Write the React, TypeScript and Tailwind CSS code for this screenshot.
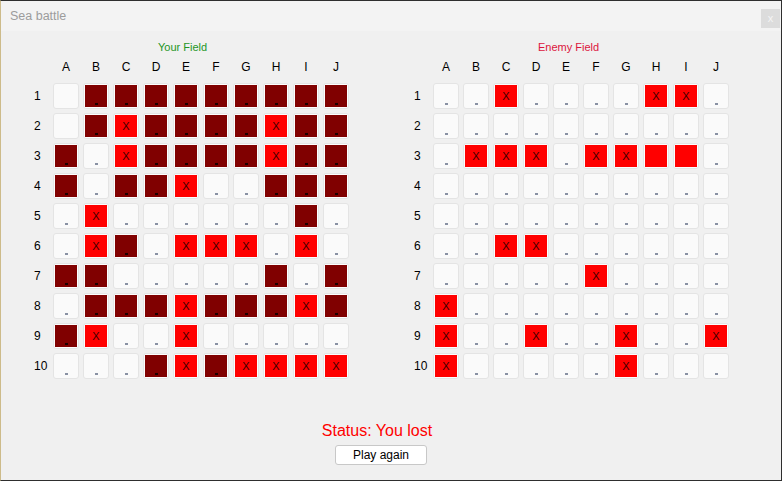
const COLS = ['A', 'B', 'C', 'D', 'E', 'F', 'G', 'H', 'I', 'J'];

// ' ' empty, '.' miss/unknown, 'S' ship, 'X' hit, 'R' hit without mark
const YOUR_FIELD = [
  ' SSSSSSSSS',
  ' SXSSSSXSS',
  'S.XSSSSXSS',
  'S.SSX..SSS',
  '.X......S.',
  '.XS.XXX.X.',
  'SS.....S.S',
  '.SSSXSSSXS',
  'SX..X.....',
  '...SXSXXXX',
];

const ENEMY_FIELD = [
  '..X....XX.',
  '..........',
  '.XXX.XXRR.',
  '..........',
  '..........',
  '..XX......',
  '.....X....',
  'X.........',
  'X..X..X..X',
  'X.....X...',
];

function Cell({ v }: { v: string }) {
  const base = 'flex h-[26px] w-[26px] rounded-[3px] border border-[#e4e4e4]';

  if (v === ' ') return <div className={`${base} bg-[#fafafa]`} />;

  if (v === '.')
    return (
      <div className={`${base} flex-col items-center justify-end bg-[#fafafa] pb-[3px]`}>
        <span className="h-[2px] w-[3px] bg-[#8890a2]" />
      </div>
    );

  if (v === 'S')
    return (
      <div className={`${base} bg-[#fdfdfd] p-px`}>
        <div className="flex h-[22px] w-[22px] flex-col items-center justify-end bg-[#800000] pb-[2px]">
          <span className="h-[2px] w-[3px] bg-[#1a0000]" />
        </div>
      </div>
    );

  return (
    <div className={`${base} bg-[#fdfdfd] p-px`}>
      <div className="flex h-[22px] w-[22px] items-center justify-center bg-[#ff0000] text-[11px] leading-none text-[#3a0000]">
        {v === 'X' ? 'X' : ''}
      </div>
    </div>
  );
}

function Field({ title, titleColor, rows }: { title: string; titleColor: string; rows: string[] }) {
  return (
    <div className="flex w-[315px] flex-col">
      <div className={`h-[14px] pl-[124px] text-[11px] leading-[14px] ${titleColor}`}>{title}</div>
      <div className="mt-[6px] grid h-[14px] grid-cols-[15px_repeat(10,26px)] gap-x-[4px] text-[12px] leading-[14px] text-black">
        <span />
        {COLS.map((c) => (
          <span key={c} className="text-center">{c}</span>
        ))}
      </div>
      <div className="mt-[9px] grid grid-cols-[15px_repeat(10,26px)] gap-[4px]">
        {rows.map((row, r) => (
          <div key={r} className="contents">
            <span className="flex items-center text-[12px] text-black">{r + 1}</span>
            {row.split('').map((v, c) => (
              <Cell key={c} v={v} />
            ))}
          </div>
        ))}
      </div>
    </div>
  );
}

export default function App() {
  return (
    <div
      className="flex h-[481px] w-[782px] flex-col border-y border-r border-l border-y-[#2e2e2e] border-r-[#2e2e2e] border-l-[#cdbb8a] bg-[#f0f0f0]"
      style={{ fontFamily: '"Liberation Sans", Arial, sans-serif' }}
    >
      <header className="flex h-[30px] items-center justify-between bg-[#f3f3f3] pl-[9px] pr-[1px]">
        <span className="text-[12.5px] text-[#9c9c9c]">Sea battle</span>
        <div className="mt-[5px] flex h-[19px] w-[19px] items-center justify-center bg-[#dcdcdc] text-[11px] leading-none text-[#f4f4f4]">
          x
        </div>
      </header>

      <main className="flex flex-1 flex-col">
        <div className="flex gap-[65px] pl-[33px] pt-[9px]">
          <Field title="Your Field" titleColor="text-[#1f961f]" rows={YOUR_FIELD} />
          <Field title="Enemy Field" titleColor="text-[#dc143c]" rows={ENEMY_FIELD} />
        </div>

        <div className="mt-[43px] flex flex-col items-center pr-[20px]">
          <p className="pr-[8px] text-[16px] leading-[18px] text-[#ff0000]">Status: You lost</p>
          <button className="mt-[5px] h-[20px] w-[92px] rounded-[3px] border border-[#c8c8c8] bg-white text-[12px] leading-none text-black">
            Play again
          </button>
        </div>
      </main>
    </div>
  );
}
